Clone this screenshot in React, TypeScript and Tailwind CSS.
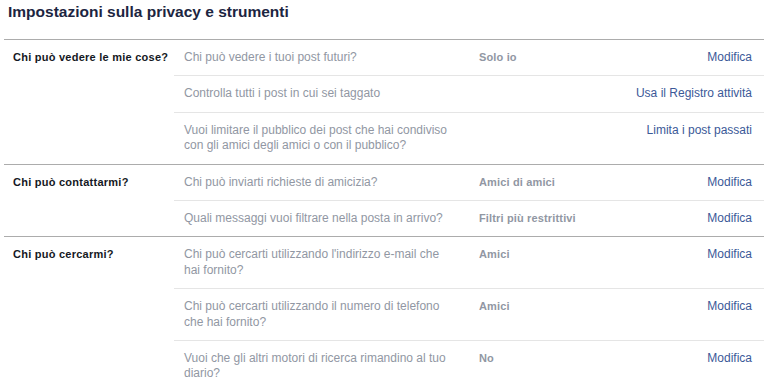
import React from "react";

type Row = { q: string; v?: string; link: string };
type Section = { label: string; rows: Row[] };

const sections: Section[] = [
  {
    label: "Chi può vedere le mie cose?",
    rows: [
      { q: "Chi può vedere i tuoi post futuri?", v: "Solo io", link: "Modifica" },
      { q: "Controlla tutti i post in cui sei taggato", link: "Usa il Registro attività" },
      {
        q: "Vuoi limitare il pubblico dei post che hai condiviso con gli amici degli amici o con il pubblico?",
        link: "Limita i post passati",
      },
    ],
  },
  {
    label: "Chi può contattarmi?",
    rows: [
      { q: "Chi può inviarti richieste di amicizia?", v: "Amici di amici", link: "Modifica" },
      { q: "Quali messaggi vuoi filtrare nella posta in arrivo?", v: "Filtri più restrittivi", link: "Modifica" },
    ],
  },
  {
    label: "Chi può cercarmi?",
    rows: [
      { q: "Chi può cercarti utilizzando l'indirizzo e-mail che hai fornito?", v: "Amici", link: "Modifica" },
      { q: "Chi può cercarti utilizzando il numero di telefono che hai fornito?", v: "Amici", link: "Modifica" },
      { q: "Vuoi che gli altri motori di ricerca rimandino al tuo diario?", v: "No", link: "Modifica" },
    ],
  },
];

export default function App() {
  return (
    <div className="w-[764px] h-[384px] overflow-hidden bg-white font-['Liberation_Sans',Arial,sans-serif]">
      <h1 className="h-[39px] pl-[8px] pt-[2px] text-[15.5px] leading-[20px] font-bold text-[#1c2541]">
        Impostazioni sulla privacy e strumenti
      </h1>
      <div className="ml-[4px]">
        {sections.map((s) => (
          <div key={s.label} className="flex border-t border-[#acacac]">
            <div className="w-[170px] shrink-0 pl-[9px] pt-[10px] text-[11px] leading-[15.4px] font-bold tracking-[0.25px] text-[#141823]">
              {s.label}
            </div>
            <div className="flex-1">
              {s.rows.map((r, i) => (
                <div
                  key={i}
                  className={
                    "flex pt-[10px] pb-[10px] text-[12px] leading-[15.4px] " +
                    (i > 0 ? "border-t border-[#e5e5e5]" : "")
                  }
                >
                  <div className="w-[305px] shrink-0 pl-[10px] pr-[23px] text-[#9197a3]">{r.q}</div>
                  <div className="flex-1 text-[11px] font-bold tracking-[0.15px] text-[#9197a3]">{r.v}</div>
                  <div className="shrink-0 pr-[12px] text-right text-[#3b5998]">{r.link}</div>
                </div>
              ))}
            </div>
          </div>
        ))}
      </div>
    </div>
  );
}
